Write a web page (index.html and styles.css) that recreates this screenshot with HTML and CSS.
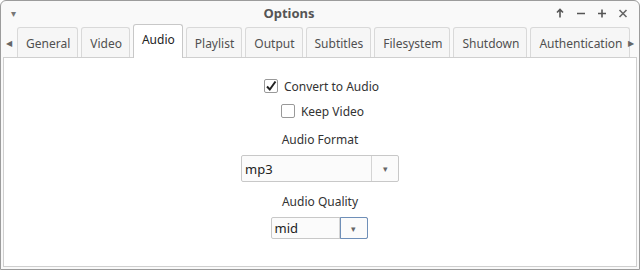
FILE: index.html
```html
<!DOCTYPE html>
<html lang="en">
<head>
<meta charset="UTF-8">
<title>Options</title>
<link rel="stylesheet" href="styles.css">
</head>
<body>
  <div class="window">
    <!-- Barra de título -->
    <div class="titlebar">
      <span class="menu-arrow">&#9662;</span>
      <span class="title">Options</span>
      <div class="wm-buttons">
        <svg width="10" height="10" viewBox="0 0 10 10"><path d="M5 1.5 L5 9.5 M2 4.5 L5 1.5 L8 4.5" stroke="#555" stroke-width="1.6" fill="none"/></svg>
        <svg width="10" height="10" viewBox="0 0 10 10"><path d="M1 5.5 L9 5.5" stroke="#555" stroke-width="1.6"/></svg>
        <svg width="10" height="10" viewBox="0 0 10 10"><path d="M1 5.5 L9 5.5 M5 1.5 L5 9.5" stroke="#555" stroke-width="1.6"/></svg>
        <svg width="10" height="10" viewBox="0 0 10 10"><path d="M1.5 2 L8.5 9 M8.5 2 L1.5 9" stroke="#666" stroke-width="1.6"/></svg>
      </div>
    </div>

    <!-- Pestañas -->
    <div class="tabbar">
      <span class="scroll-arrow">&#9664;</span>
      <div class="tabs">
        <div class="tab">General</div>
        <div class="tab">Video</div>
        <div class="tab active">Audio</div>
        <div class="tab">Playlist</div>
        <div class="tab">Output</div>
        <div class="tab">Subtitles</div>
        <div class="tab">Filesystem</div>
        <div class="tab">Shutdown</div>
        <div class="tab">Authentication</div>
      </div>
      <span class="scroll-arrow">&#9654;</span>
    </div>

    <!-- Contenido de la pestaña Audio -->
    <div class="panel">
      <label class="check">
        <span class="box">
          <svg width="12" height="12" viewBox="0 0 12 12"><path d="M2 6.5 L4.8 9.5 L10.5 1.5" stroke="#222" stroke-width="2" fill="none"/></svg>
        </span>
        Convert to Audio
      </label>
      <label class="check keep">
        <span class="box"></span>
        Keep Video
      </label>

      <div class="field-label">Audio Format</div>
      <div class="combo format">
        <span class="combo-text">mp3</span>
        <span class="combo-btn">&#9662;</span>
      </div>

      <div class="field-label">Audio Quality</div>
      <div class="combo quality">
        <span class="combo-text">mid</span>
        <span class="combo-btn focus">&#9662;</span>
      </div>
    </div>
  </div>
</body>
</html>
```

FILE: styles.css
```css
  body {
      margin: 0;
      font-family: "Noto Sans", "Open Sans", sans-serif;
      font-size: 12px;
      color: #333;
      background-color: #fff;
  }

  /* Ventana principal */
  .window {
      width: 640px;
      height: 270px;
      box-sizing: border-box;
      border: 1px solid #9c9c9c;
      border-radius: 6px 6px 0 0;
      background-color: #f9f9f9;
      display: flex;
      flex-direction: column;
      overflow: hidden;
  }

  /* Barra de título */
  .titlebar {
      height: 23px;
      display: flex;
      align-items: center;
      padding: 0 11px 0 10px;
      flex-shrink: 0;
  }

  .menu-arrow {
      font-size: 10px;
      color: #777;
      width: 12px;
  }

  .title {
      flex: 1;
      text-align: center;
      font-weight: bold;
      font-size: 13px;
      color: #555;
  }

  .wm-buttons {
      display: flex;
      gap: 11px;
      align-items: center;
  }

  /* Barra de pestañas */
  .tabbar {
      height: 33px;
      display: flex;
      align-items: flex-end;
      flex-shrink: 0;
  }

  .scroll-arrow {
      font-size: 8px;
      color: #666;
      width: 16px;
      flex-shrink: 0;
      text-align: center;
      align-self: center;
      padding-top: 3px;
  }

  .tabs {
      display: flex;
      gap: 3px;
      flex: 1;
      min-width: 0;
      align-items: flex-end;
  }

  .tab {
      height: 30px;
      box-sizing: border-box;
      padding: 2px 7px 0 8px;
      border: 1px solid #d9d9d9;
      border-bottom: none;
      border-radius: 3px 3px 0 0;
      background-color: #f6f6f6;
      display: flex;
      align-items: center;
      color: #505050;
      white-space: nowrap;
  }

  .tab.active {
      height: 34px;
      background-color: #fff;
      border-color: #c8c8c8;
      padding-top: 0;
      padding-bottom: 4px;
      color: #222;
      margin-bottom: -1px;
      position: relative;
  }

  /* Panel de contenido */
  .panel {
      flex: 1;
      margin: 0 2px 2px 2px;
      border: 1px solid #cfcfcf;
      background-color: #fff;
      display: flex;
      flex-direction: column;
      align-items: center;
      padding-top: 19px;
  }

  .check {
      display: flex;
      align-items: center;
      gap: 6px;
      height: 18px;
      color: #333;
      margin-left: 3px;
  }

  .check.keep {
      margin-top: 7px;
      margin-left: 5px;
  }

  .box {
      width: 12px;
      height: 12px;
      border: 1px solid #999;
      border-radius: 2px;
      background-color: #fff;
      display: flex;
      align-items: center;
      justify-content: center;
  }

  .field-label {
      margin-top: 11px;
      height: 18px;
      line-height: 18px;
      color: #333;
  }

  /* Cajas combinadas */
  .combo {
      display: flex;
      box-sizing: border-box;
      border: 1px solid #c8c8c8;
      border-radius: 2px;
      background-color: #fbfbfb;
      margin-top: 6px;
  }

  .combo.format {
      width: 158px;
      height: 27px;
  }

  .combo.quality {
      width: 97px;
      height: 22px;
      margin-top: 6px;
      margin-left: -2px;
  }

  .combo-text {
      flex: 1;
      display: flex;
      align-items: center;
      padding-left: 3px;
      font-size: 13px;
      color: #222;
      border-right: 1px solid #d4d4d4;
  }

  .combo-btn {
      width: 26px;
      display: flex;
      align-items: center;
      justify-content: center;
      font-size: 9px;
      color: #666;
  }

  .combo-btn.focus {
      border: 1px solid #6f8fb8;
      border-radius: 0 2px 2px 0;
      margin: -1px -1px -1px 0;
  }
```
